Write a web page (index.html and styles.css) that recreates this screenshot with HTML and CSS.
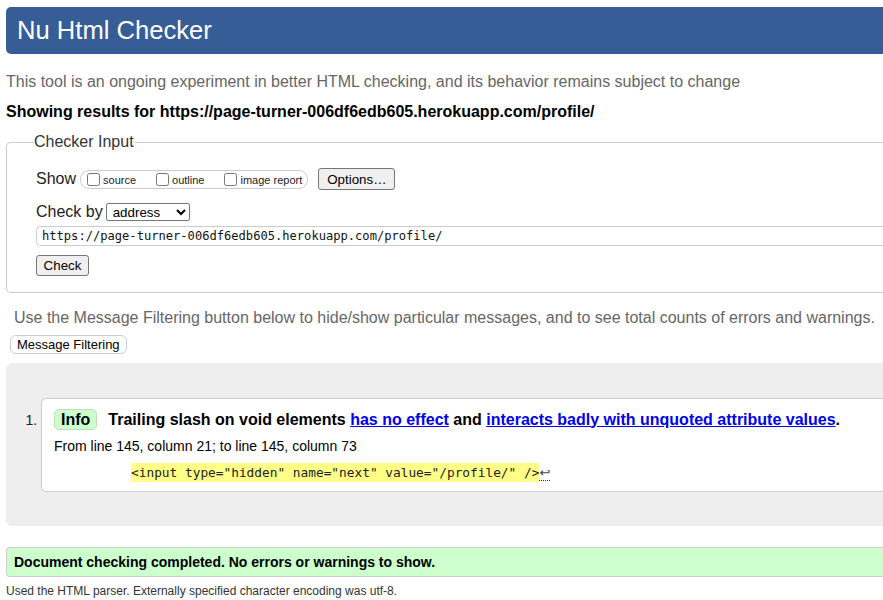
FILE: index.html
```html
<!DOCTYPE html>
<html lang="en">
<head>
<meta charset="utf-8">
<title>Showing results for https://page-turner-006df6edb605.herokuapp.com/profile/ - Nu Html Checker</title>
<link rel="stylesheet" href="styles.css">
</head>
<body>
<div class="page">
  <h1 class="title">Nu Html Checker</h1>
  <p class="about">This tool is an ongoing experiment in better HTML checking, and its behavior remains subject to change</p>
  <p class="showing">Showing results for https://page-turner-006df6edb605.herokuapp.com/profile/</p>

  <fieldset class="input-box">
    <legend class="legend">Checker Input</legend>
    <div class="row row-show">
      <span class="row-label">Show</span>
      <span class="opts">
        <label class="opt"><input type="checkbox" class="cb"><span>source</span></label>
        <label class="opt"><input type="checkbox" class="cb"><span>outline</span></label>
        <label class="opt opt-last"><input type="checkbox" class="cb"><span>image report</span></label>
      </span>
      <button class="btn btn-options" type="button">Options…</button>
    </div>
    <div class="row row-by">
      <span class="row-label">Check by</span>
      <select class="sel"><option>address</option></select>
    </div>
    <div class="url">https://page-turner-006df6edb605.herokuapp.com/profile/</div>
    <button class="btn btn-check" type="button">Check</button>
  </fieldset>

  <p class="filter-note">Use the Message Filtering button below to hide/show particular messages, and to see total counts of errors and warnings.</p>
  <button class="btn-filter" type="button">Message Filtering</button>

  <div class="results">
    <ol class="list">
      <li class="card">
        <p class="msg"><span class="badge">Info</span><span class="msg-text">Trailing slash on void elements <a href="#" class="lnk">has no effect</a> and <a href="#" class="lnk">interacts badly with unquoted attribute values</a>.</span></p>
        <p class="loc">From line 145, column 21; to line 145, column 73</p>
        <p class="extract"><code class="code">          <span class="hl">&lt;input type="hidden" name="next" value="/profile/" /&gt;</span><span class="lf">↩</span></code></p>
      </li>
    </ol>
  </div>

  <p class="success">Document checking completed. No errors or warnings to show.</p>
  <p class="details">Used the HTML parser. Externally specified character encoding was utf-8.</p>
</div>
</body>
</html>
```

FILE: styles.css
```css
html {
  overflow: hidden;
}

body {
  margin: 0;
  padding: 7px 0 0 6px;
  font-family: "Liberation Sans", Arial, sans-serif;
  color: #000;
  background: #fff;
}

.page {
  width: 960px;
}

.title {
  margin: 0;
  height: 47px;
  line-height: 47px;
  padding-left: 11px;
  background: #365d95;
  color: #fff;
  font-size: 25.6px;
  font-weight: normal;
  border-radius: 5px 0 0 5px;
}

.about {
  margin: 18px 0 0;
  font-size: 16px;
  line-height: 20px;
  color: #666;
}

.showing {
  margin: 10px 0 0;
  font-size: 16px;
  line-height: 20px;
  font-weight: bold;
}

.input-box {
  margin: 10px 0 0;
  padding: 16px 0 16px 29px;
  border: 1px solid #ccc;
  border-right: none;
  border-radius: 5px 0 0 5px;
  min-width: 0;
}

.legend {
  padding: 0 1px;
  margin-left: -3px;
  font-size: 16px;
  line-height: 20px;
  color: #333;
}

.row {
  display: flex;
  align-items: center;
}

.row-show {
  height: 22px;
}

.row-label {
  font-size: 16px;
  line-height: 20px;
  color: #222;
}

.opts {
  display: inline-flex;
  align-items: flex-end;
  margin-left: 4px;
  height: 17px;
  padding: 0 5px 0 2px;
  border: 1px solid #ccc;
  border-radius: 9px;
}

.opt {
  display: inline-flex;
  align-items: flex-end;
  font-size: 11px;
  line-height: 13px;
  margin-right: 16px;
  color: #222;
}

.opt-last {
  margin-right: 0;
}

.cb {
  width: 13px;
  height: 13px;
  margin: 0 3px 2px 4px;
}

.opt span {
  padding-bottom: 1px;
}

.btn {
  font-family: "Liberation Sans", Arial, sans-serif;
  font-size: 13.33px;
  color: #000;
  background: #efefef;
  border: 1px solid #767676;
  border-radius: 3px;
  padding: 0 8px;
}

.btn-options {
  margin-left: 10px;
  height: 22px;
  width: 77px;
}

.row-by {
  margin-top: 12px;
  height: 20px;
}

.sel {
  margin-left: 3px;
  width: 84px;
  height: 18px;
  font-family: "Liberation Sans", Arial, sans-serif;
  font-size: 13.33px;
  border: 1px solid #767676;
  border-radius: 2px;
  background: #fff;
  padding: 0 0 0 2px;
}

.url {
  margin-top: 4px;
  height: 18px;
  line-height: 18px;
  border: 1px solid #ccc;
  border-right: none;
  border-radius: 5px 0 0 5px;
  padding-left: 5px;
  font-family: "DejaVu Sans Mono", "Liberation Mono", monospace;
  font-size: 12.1px;
  color: #111;
  white-space: nowrap;
}

.btn-check {
  display: block;
  margin-top: 9px;
  height: 21px;
  width: 53px;
  padding: 0;
}

.filter-note {
  margin: 15px 0 0 8px;
  font-size: 16px;
  line-height: 20px;
  color: #666;
}

.btn-filter {
  display: block;
  margin: 7px 0 0 4px;
  height: 19px;
  padding: 0 6px;
  font-family: "Liberation Sans", Arial, sans-serif;
  font-size: 13px;
  color: #000;
  background: #fff;
  border: 1px solid #ccc;
  border-radius: 6px;
}

.results {
  margin-top: 9px;
  padding: 35px 0 34px 35px;
  background: #eee;
  border-radius: 6px 0 0 6px;
}

.list {
  margin: 0;
  padding: 0;
  font-size: 14px;
  color: #222;
}

.card {
  padding: 10px 0 10px 12px;
  background: #fff;
  border: 1px solid #ccc;
  border-right: none;
  border-radius: 5px 0 0 5px;
}

.msg {
  margin: 0;
  display: flex;
  align-items: center;
  height: 21px;
  font-size: 16px;
  font-weight: bold;
  color: #000;
}

.badge {
  display: inline-block;
  height: 19px;
  line-height: 19px;
  padding: 0 6px;
  background: #cfc;
  border: 1px solid #bdb;
  border-radius: 5px;
  margin-right: 11px;
}

.lnk {
  color: #00e;
  text-decoration: underline;
}

.loc {
  margin: 7px 0 0;
  font-size: 14px;
  line-height: 18px;
  color: #000;
}

.extract {
  margin: 9px 0 0;
  line-height: 17px;
}

.code {
  font-family: "DejaVu Sans Mono", "Liberation Mono", monospace;
  font-size: 12.8px;
  white-space: pre;
  color: #222;
}

.hl {
  background: #ff8;
  padding: 2px 0;
}

.lf {
  font-family: "DejaVu Sans", sans-serif;
  font-size: 13px;
  color: #444;
  border-bottom: 1px dotted #333;
}

.success {
  margin: 21px 0 0;
  height: 28px;
  line-height: 28px;
  padding-left: 7px;
  background: #cfc;
  border: 1px solid #ccc;
  border-right: none;
  border-radius: 4px 0 0 4px;
  font-size: 14px;
  font-weight: bold;
  color: #000;
}

.details {
  margin: 6px 0 0;
  font-size: 12px;
  line-height: 16px;
  color: #333;
}
```
